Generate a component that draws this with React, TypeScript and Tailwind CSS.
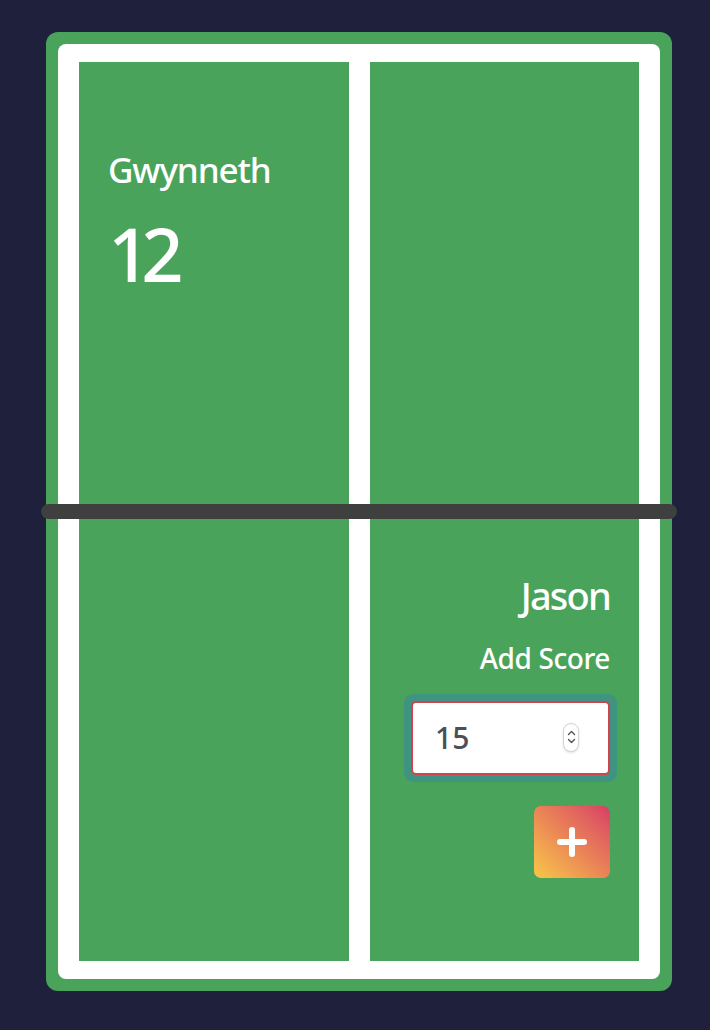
export default function App() {
  return (
    <div className="min-h-[1030px] w-[710px] bg-[#1f203b] pt-[32px] pl-[46px]" style={{ fontFamily: '"Noto Sans", "Open Sans", sans-serif' }}>
      <div className="relative w-[626px] rounded-[12px] bg-[#4aa35b] p-[12px]">
        <div className="rounded-[8px] bg-white px-[21px] py-[18px]">
          <div className="grid h-[899px] grid-cols-2 gap-[21px]">
            {/* player one */}
            <div className="flex flex-col bg-[#4aa35b] pl-[29px] font-medium text-white">
              <h2 className="mt-[90px] text-[35px] leading-none tracking-[-1.1px]">Gwynneth</h2>
              <p className="mt-[30px] text-[74px] leading-none tracking-[-9px]">12</p>
            </div>
            {/* player two */}
            <div className="grid grid-rows-2 bg-[#4aa35b] font-medium text-white">
              <div />
              <div className="flex flex-col items-end pr-[29px] pt-[64px]">
                <h2 className="text-[38px] leading-none tracking-[-1.8px]">Jason</h2>
                <label className="mt-[30px] text-[28px] leading-none tracking-[-0.4px]">Add Score</label>
                <div className="relative -mr-[7px] mt-[22px] rounded-[9px] bg-[#3f9481] p-[7px]">
                  <input
                    type="text"
                    readOnly
                    value="15"
                    className="h-[74px] w-[199px] rounded-[5px] border-2 border-[#d2434b] bg-white pl-[22px] text-[30px] font-medium text-[#4b4f58] outline-none"
                  />
                  <span className="absolute right-[38px] top-[29px] flex h-[29px] w-[16px] flex-col items-center justify-center gap-[2px] rounded-full border border-gray-300 bg-white shadow-sm">
                    <svg width="9" height="6" viewBox="0 0 9 6" fill="none" stroke="#555" strokeWidth="1.4" strokeLinecap="round" strokeLinejoin="round">
                      <path d="M1.5 4.5 4.5 1.5 7.5 4.5" />
                    </svg>
                    <svg width="9" height="6" viewBox="0 0 9 6" fill="none" stroke="#555" strokeWidth="1.4" strokeLinecap="round" strokeLinejoin="round">
                      <path d="M1.5 1.5 4.5 4.5 7.5 1.5" />
                    </svg>
                  </span>
                </div>
                <button className="mt-[24px] flex h-[72px] w-[76px] items-center justify-center rounded-[7px] bg-linear-to-tr from-[#f7c745] via-[#ea8456] to-[#d73c64]">
                  <svg width="30" height="30" viewBox="0 0 30 30" stroke="white" strokeWidth="6" strokeLinecap="round">
                    <path d="M15 3v24M3 15h24" />
                  </svg>
                </button>
              </div>
            </div>
          </div>
        </div>
        {/* net */}
        <div className="absolute -left-[5px] -right-[5px] top-[472px] h-[15px] rounded-full bg-[#3f3f40]" />
      </div>
    </div>
  );
}
